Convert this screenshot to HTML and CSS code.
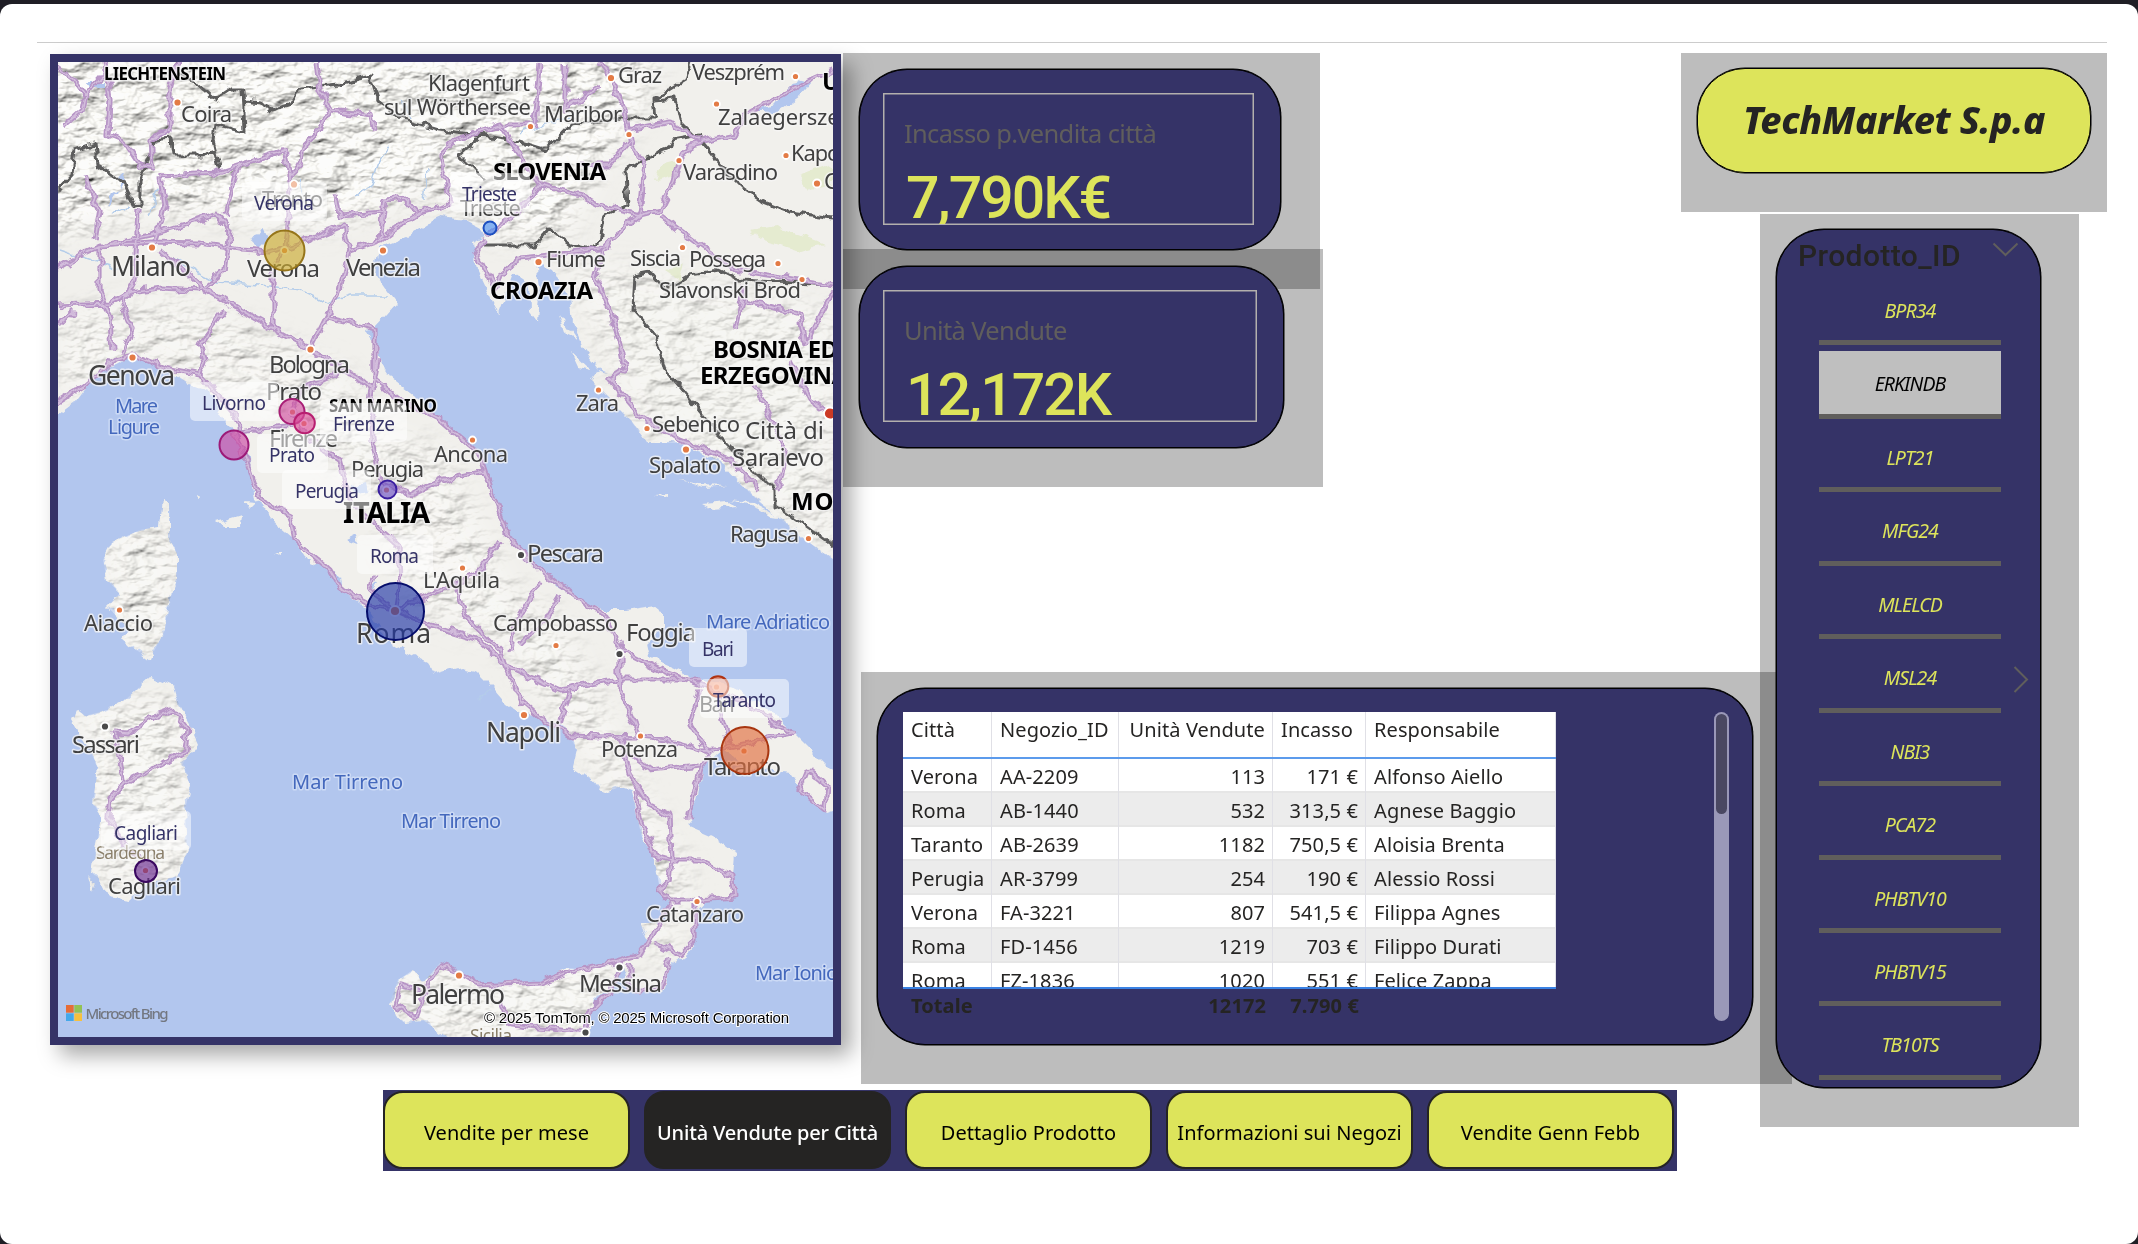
FILE: index.html
```html
<!DOCTYPE html>
<html lang="it">
<head>
<meta charset="utf-8">
<title>TechMarket S.p.a</title>
<link rel="stylesheet" href="styles.css">
</head>
<body>
<div class="sheet">
  <div class="rule"></div>
  <main class="report">
    <section class="map">
      <svg viewBox="58 62 775 975" width="775" height="975">
        <defs>
          <filter id="rough" x="0" y="0" width="100%" height="100%">
            <feTurbulence type="fractalNoise" baseFrequency="0.09" numOctaves="2" seed="4" result="n"/>
            <feDisplacementMap in="SourceGraphic" in2="n" scale="10" xChannelSelector="R" yChannelSelector="G"/>
          </filter>
          <filter id="relief" x="0" y="0" width="100%" height="100%">
            <feTurbulence type="fractalNoise" baseFrequency="0.035 0.06" numOctaves="4" seed="8"/>
            <feDiffuseLighting lighting-color="#fffefa" surfaceScale="9" diffuseConstant="1.13"><feDistantLight azimuth="235" elevation="58"/></feDiffuseLighting>
          </filter>
          <filter id="soft"><feGaussianBlur stdDeviation="14"/></filter>
          <path id="mainland" d="M40 40H850V575L833 560 810 543 790 527 760 503 740 483 723 463 680 443 647 443 630 420 607 397 590 380 597 370 610 373 597 367 583 347 573 323 570 297 553 270 537 263 540 285 537 320 531 312 530 285 513 273 503 300 498 313 493 303 477 270 473 243 487 237 480 227 467 220 440 217 433 220 407 237 380 247 375 273 387 290 397 303 375 327 378 357 393 380 423 403 440 420 457 433 472 445 487 470 497 510 503 530 537 567 557 587 580 600 603 610 627 610 653 606 663 610 663 627 647 643 650 657 673 667 697 680 733 687 773 713 793 733 833 773 850 790V805L827 813 800 787 790 773 750 767 723 750 703 767 697 800 688 813 690 827 713 837 735 853 733 877 737 888 733 897 707 900 695 913 695 943 687 955 670 967 663 993 630 992 627 980 622 962 640 957 648 940 640 925 667 920 670 903 660 890 657 873 653 853 642 837 637 817 632 790 620 787 603 793 593 780 573 767 577 750 565 728 540 717 520 713 508 705 495 690 477 672 460 668 435 675 427 663 407 653 387 640 367 608 343 593 340 577 320 560 307 560 292 537 280 527 270 520 267 510 254 500 252 485 250 460 240 445 232 430 222 415 210 392 190 385 170 372 150 360 130 357 105 370 90 382 75 402 58 415 40 425Z"/>
          <path id="islands" d="M163 500L170 503 170 540 177 553 177 580 167 607 165 630 153 653 150 660 123 640 129 630 108 607 120 593 107 580 103 560 112 543 140 530 160 527ZM77 710L85 716 107 710 123 702 150 677 173 687 177 700 187 720 197 743 183 763 190 787 185 810 187 850 177 877 163 880 147 883 130 900 110 897 103 883 92 873 97 843 102 817 93 803 98 767 93 757 73 720ZM390 1003L398 980 413 970 423 983 440 963 460 973 483 987 540 983 567 968 590 970 618 960 610 987 593 1000 590 1020 590 1050H455L447 1037 423 1020 403 1022ZM217 522L228 519 241 515 240 526 222 526ZM680 481L700 485 728 486 705 488ZM656 495L668 494 668 498ZM702 504L728 502 736 507 712 509ZM728 500L750 504 770 517 780 518 752 502ZM308 558L318 561 312 564ZM88 876L96 885 93 893ZM560 315L577 340 566 335ZM571 352L590 370 578 367ZM596 376L610 388 603 389ZM638 412L645 420 641 422ZM275 553H282V556ZM196 495L201 497 197 499ZM244 501L254 502 248 508Z"/>
          <clipPath id="land"><use href="#mainland"/><use href="#islands"/></clipPath>
          <mask id="hills">
            <g fill="#fff" filter="url(#soft)">
              <path d="M40 40H660L640 110 600 165 560 240 500 235 430 190 330 225 230 215 140 210 40 240Z"/>
              <path d="M60 320L110 300 140 370 60 400ZM135 295L210 310 340 370 380 430 440 450 480 520 510 590 560 620 600 700 640 790 690 880 660 985 640 900 600 770 560 720 500 640 420 610 370 500 310 430 200 380 130 350Z" opacity=".6"/>
              <path d="M560 260L640 270 833 310V560L760 500 640 430Z" opacity=".5"/>
              <path d="M100 520H180V650H110ZM80 700H190V890H100ZM390 960H620V1040H400Z" opacity=".65"/>
            </g>
          </mask>
        </defs>
        <rect x="58" y="62" width="775" height="975" fill="#b2c6ee"/>
        <g filter="url(#rough)">
          <g fill="#f1f0ec"><use href="#mainland"/><use href="#islands"/></g>
        </g>
        <g clip-path="url(#land)">
          <g mask="url(#hills)"><rect class="relief" x="58" y="62" width="775" height="975" filter="url(#relief)"/></g>
        </g>
        <g filter="url(#rough)">
          <g fill="#dfe8c4" opacity=".7"><path d="M750 230L775 225 800 235 825 245 800 252 765 240ZM660 165L680 160 675 175 655 180ZM800 175L825 165 833 170V185L810 190ZM665 270L685 262 680 280Z"/></g>
          <g fill="#b2c6ee"><path d="M752 112L775 105 797 78 812 82 800 96 778 112ZM252 242L262 228 268 240 258 250ZM88 82H104V88H90ZM118 178L126 172 122 190ZM108 195L118 190 110 205ZM346 539L356 534 358 544ZM370 583L378 584 374 590ZM353 486L366 484 368 492 356 494ZM366 332L375 330 372 342Z"/></g>
          <g class="river"><path d="M165 255L215 282 260 285 300 290 325 303 350 295 388 295M355 198L372 185 378 165 390 145M400 100L410 118M424 200L428 168M150 215L160 185M520 133L550 123 570 118M110 215L130 205M60 250L120 270M478 700L490 690M300 180L305 205"/></g>
          <g><path id="frontier" class="border-glow" d="M58 190L72 175 75 150 95 143 97 165 125 185 135 207 140 205 140 180 155 140 170 138 172 155 200 155 215 150 220 168 213 140 215 125 245 132 243 90 230 90 215 100 195 82 178 75 175 62M243 100L262 102 270 110 290 105 300 88 340 84 370 76 378 100 400 118 440 130 480 135 520 142 546 150 570 125 620 118 655 118 653 100 685 80 690 62M655 100L675 98 680 120 700 140 720 165 745 190 760 200 790 212 833 218M700 135L672 140 668 150 640 160 625 170 627 205 605 215 600 240 590 250 570 245 548 228 535 245 480 245M483 135L460 155 475 170 485 180M635 275L650 272 665 290 690 275 720 270 740 280 833 285M635 275L633 310 655 335 665 370 690 400 720 435 750 465 775 490 775 505 805 525 833 545"/></g>
          <use href="#frontier" class="border"/>
          <g class="road"><path id="net" d="M58 67L75 80 85 95 82 110 65 125M85 95L108 70M105 62L110 100 108 135 125 142 140 165 152 168 150 138 170 130 170 90 178 60M317 62L320 90 330 108 315 135 305 145 300 165 290 175 290 190 285 250 273 270 273 330M58 268L80 255 100 246 150 242 200 243 240 250 270 252 310 240 345 225 350 250 380 240 400 225 420 212 450 204M160 250L200 285 240 310 275 330 310 350 345 370 375 390M100 246L100 290 110 320 112 350M58 305L110 303 130 292 160 288 200 290 225 270 230 230 215 212M85 175L90 190 100 210 95 240M58 402L85 385 115 360 135 355 165 368 200 375 205 360 200 345 225 310M123 355L132 330 122 305 135 280 138 210M350 250L340 290 325 320 310 350 298 340M160 176L215 173 240 165 285 150 290 175M225 215L235 175 240 165M155 240L165 205 160 176M327 317L360 325 375 330 375 380M337 195L340 215 385 212M380 240L385 200 405 198 417 212M105 245L150 235 215 215M58 325L75 310M330 110L372 115 375 130M450 204L440 155 455 140 500 125 535 125 540 65M500 125L520 155 540 185 580 195 600 205 640 215 660 210 675 180 680 160 690 145 735 135 745 115 810 80 833 70M600 62L612 80 625 110 630 140 610 165 580 165M630 140L645 165 640 215M565 65V110L600 85M660 215L700 245 735 270 800 280 833 285M640 215L610 240 600 260 595 275 610 310 620 345 625 370 610 380 640 415 680 440 730 460 760 490M487 240L475 250 495 290 500 275 520 258 600 250 610 240M487 235L515 215 540 185M745 285L742 300 735 330M745 300L800 315 805 345 833 290M755 385L770 415 785 450 778 490M790 360L810 400 830 413M628 130L670 122 700 140M375 380L400 400 440 420 480 455 495 500 510 540 540 570 580 600 605 615 622 650 660 670 700 685 740 700 795 735M345 370L300 390 292 410 310 440 340 460 350 500 375 525 398 545 400 580 395 610M292 425L240 432 235 415 200 375M234 432L250 470 260 500 290 515 295 540 330 570 342 590 370 605 395 610 430 625 480 640 505 665 520 700 545 722 570 735 640 737 665 740 700 750 725 748 795 733M378 360L370 400 372 440 380 480 410 495 440 480 485 470M395 610L440 590 480 570 500 540M455 580L465 615 500 650 515 690M395 610L370 590 375 575M505 665L560 690 620 680 700 680M570 690L560 725M620 650V690L640 735M540 580L530 600 515 625 512 650M560 595L545 620 520 645M620 735L630 775 650 805 670 815 672 860 670 880 660 890 670 900 697 900M688 820L700 770 710 755M630 755L650 770 700 765M670 860L700 860 733 877 735 897 697 900M672 860L655 855 640 820 636 790M670 903L650 940 640 955 615 962 570 972 540 982 480 985 455 970 440 965 425 990 415 1018 395 1005 400 985 420 990M620 965L610 990 590 1010 585 1032 560 1030 510 1025 500 1000M695 905V940L680 955 655 942M670 960L660 990 630 990V965M113 732L130 733 150 718 172 710 188 730 185 750 160 765 125 782 110 800 108 815 120 840 140 860M113 732L120 760 123 780M718 690L722 720 730 745M700 690L690 725 710 755M808 770L827 785 825 810 800 790Z"/></g>
          <use href="#net" class="road-core"/>
        </g>
        <g class="dots">
          <circle cx="177.500" cy="102.500" r="4"/><circle cx="294" cy="184.500" r="4"/><circle cx="152" cy="247.500" r="4"/><circle cx="383" cy="250.500" r="4"/><circle cx="310.500" cy="349.500" r="4"/><circle cx="132.500" cy="357.500" r="4"/><circle cx="611" cy="78" r="4"/><circle cx="530.500" cy="126.500" r="3.500"/><circle cx="629" cy="134.500" r="3.500"/><circle cx="716.500" cy="104" r="3.500"/><circle cx="795.500" cy="76.500" r="3.500"/><circle cx="679" cy="160.500" r="3.500"/><circle cx="786" cy="155.500" r="3.500"/><circle cx="817" cy="183.500" r="4"/><circle cx="682.500" cy="247.500" r="3.500"/><circle cx="778" cy="263.500" r="3.500"/><circle cx="802" cy="279.500" r="3.500"/><circle cx="538.500" cy="262" r="4"/><circle cx="598.500" cy="390" r="3.500"/><circle cx="647" cy="428.500" r="3.500"/><circle cx="686" cy="449.500" r="4"/><circle cx="808.500" cy="538.500" r="3.500"/><circle cx="472.500" cy="440" r="3.500"/><circle cx="462.500" cy="568" r="3.500"/><circle cx="556" cy="645.500" r="3.500"/><circle cx="524" cy="715" r="4"/><circle cx="640.500" cy="736" r="3.500"/><circle cx="697" cy="901.500" r="3.500"/><circle cx="119.500" cy="610" r="3.500"/><circle cx="459" cy="975.500" r="4"/><circle cx="395" cy="611" r="5"/><circle cx="292.500" cy="412" r="3.500"/><circle cx="304" cy="423.500" r="3.500"/><circle cx="386.500" cy="490" r="3.500"/><circle cx="744" cy="751" r="3.500"/><circle cx="716.500" cy="687" r="3.500"/><circle cx="145.500" cy="870.500" r="3.500"/><circle cx="284.500" cy="250.500" r="3.500"/>
          <g fill="#4a4a4a"><circle cx="521" cy="555" r="4"/><circle cx="619.500" cy="654" r="4"/><circle cx="105" cy="726.500" r="4"/><circle cx="619.500" cy="967.500" r="4"/><circle cx="585.500" cy="1032.500" r="4"/></g>
          <circle cx="830" cy="413.500" r="6" fill="#cc3a25"/>
        </g>
        <g class="city" font-size="22">
          <text x="181" y="121.500" textLength="51">Coira</text><text x="428" y="90.500" textLength="102">Klagenfurt</text><text x="384" y="114.500" textLength="147">sul Wörthersee</text><text x="618" y="83" textLength="44">Graz</text><text x="544" y="121.500" textLength="78">Maribor</text><text x="692" y="80" textLength="93">Veszprém</text><text x="718" y="124.500" textLength="135">Zalaegerszeg</text><text x="791" y="161" textLength="88">Kaposvár</text><text x="824" y="189">Csurgó</text><text x="683" y="179.500" textLength="95">Varasdino</text><text x="546" y="267" textLength="60">Fiume</text><text x="630" y="266" textLength="51">Siscia</text><text x="689" y="266.500" textLength="77">Possega</text><text x="659" y="298" textLength="142">Slavonski Brod</text>
          <text x="262" y="207" textLength="61">Trento</text><text x="460" y="215.500" textLength="61">Trieste</text><text x="351" y="477" textLength="73">Perugia</text><text x="434" y="462" textLength="74">Ancona</text><text x="423" y="588" textLength="77">L'Aquila</text><text x="84" y="630.500" textLength="69">Aiaccio</text><text x="576" y="410.500" textLength="43">Zara</text><text x="652" y="432" textLength="88">Sebenico</text><text x="649" y="473" textLength="72">Spalato</text><text x="730" y="542" textLength="69">Ragusa</text><text x="493" y="630.500" textLength="125">Campobasso</text><text x="601" y="756.500" textLength="77">Potenza</text><text x="108" y="893.500" textLength="73">Cagliari</text><text x="646" y="921.500" textLength="98">Catanzaro</text><text x="699" y="711.500" textLength="36">Bari</text>
        </g>
        <g class="city" font-size="24">
          <text x="247" y="276.500" textLength="73">Verona</text><text x="346" y="275.500" textLength="75">Venezia</text><text x="269" y="372.500" textLength="81">Bologna</text><text x="266" y="400" textLength="56">Prato</text><text x="269" y="447" textLength="69">Firenze</text><text x="745" y="439" textLength="79">Città di</text><text x="732" y="466" textLength="92">Saraievo</text><text x="527" y="562" textLength="77">Pescara</text><text x="626" y="641" textLength="70">Foggia</text><text x="704" y="775" textLength="77">Taranto</text><text x="72" y="752.500" textLength="68">Sassari</text><text x="579" y="992" textLength="83">Messina</text>
        </g>
        <g class="city" font-size="26.500">
          <text x="111" y="275.500" textLength="80">Milano</text><text x="88" y="385" textLength="87">Genova</text><text x="356" y="642.500" textLength="75">Roma</text><text x="486" y="741.500" textLength="75">Napoli</text><text x="411" y="1003.500" textLength="94">Palermo</text>
        </g>
        <g class="region" font-size="17.500"><text x="96" y="858.500" textLength="69">Sardegna</text><text x="470" y="1042" textLength="42">Sicilia</text></g>
        <g class="sea" font-size="20"><text x="115" y="413" textLength="43">Mare</text><text x="108" y="434" textLength="52">Ligure</text><text x="706" y="628.500" textLength="124">Mare Adriatico</text><text x="292" y="788.500" textLength="111">Mar Tirreno</text><text x="401" y="827.500" textLength="100">Mar Tirreno</text><text x="755" y="979.500" textLength="83">Mar Ionio</text></g>
        <g class="country" font-size="24">
          <text x="493" y="180" textLength="113">SLOVENIA</text><text x="490" y="299" textLength="103">CROAZIA</text><text x="713" y="357.500" textLength="125">BOSNIA ED</text><text x="700" y="384" textLength="148">ERZEGOVINA</text><text x="791" y="510" textLength="182">MONTENEGRO</text><text x="822" y="89.500">UNGHERIA</text>
          <g font-size="17"><text x="104" y="79.500" textLength="122">LIECHTENSTEIN</text><text x="329" y="412" textLength="108">SAN MARINO</text></g>
          <text x="343" y="522.500" font-size="29" textLength="87">ITALIA</text>
        </g>
        <g class="bubbles">
          <circle cx="284.500" cy="250.500" r="20" fill="#cbab32" stroke="#96751a"/>
          <circle cx="490" cy="228" r="6.500" fill="#4a8ef0" stroke="#1c4fc0"/>
          <circle cx="292" cy="411.500" r="12.500" fill="#d050a0" stroke="#a81e76"/>
          <circle cx="304.500" cy="423" r="10.300" fill="#dd529b" stroke="#b81e70"/>
          <circle cx="234" cy="445" r="14.500" fill="#cc4ba4" stroke="#9c1a78"/>
          <circle cx="387.500" cy="489.500" r="9" fill="#6b4fc0" stroke="#3b1fa0"/>
          <circle cx="395.500" cy="611.500" r="28.500" fill="#2338a6" stroke="#050d6b"/>
          <circle cx="718" cy="686.500" r="10.300" fill="#f07a50" stroke="#b03210"/>
          <circle cx="745" cy="750.500" r="23.500" fill="#e2713f" stroke="#a83610"/>
          <circle cx="146" cy="871" r="11" fill="#6b2a90" stroke="#3a0860"/>
        </g>
        <g class="tags">
          <rect x="242" y="182" width="85" height="39" rx="5"/><rect x="450" y="173" width="80" height="39" rx="5"/><rect x="190" y="382" width="88" height="39" rx="5"/><rect x="320" y="403" width="87" height="39" rx="5"/><rect x="257" y="434" width="71" height="39" rx="5"/><rect x="282" y="470" width="89" height="39" rx="5"/><rect x="357" y="535" width="76" height="39" rx="5"/><rect x="689" y="628" width="58" height="39" rx="5"/><rect x="700" y="679" width="89" height="39" rx="5"/><rect x="101" y="811" width="90" height="39" rx="5"/>
        </g>
        <g class="tag-text" font-size="19">
          <text x="254" y="210" textLength="60">Verona</text><text x="462" y="201" textLength="55">Trieste</text><text x="202" y="410" textLength="64">Livorno</text><text x="333" y="431" textLength="62">Firenze</text><text x="269" y="462" textLength="46">Prato</text><text x="295" y="498" textLength="64">Perugia</text><text x="370" y="563" textLength="49">Roma</text><text x="702" y="656" textLength="32">Bari</text><text x="713" y="707" textLength="63">Taranto</text><text x="114" y="840" textLength="64">Cagliari</text>
        </g>
        <path fill="#e66c37" d="M66 1005H73.700V1012.700H66Z"/><path fill="#93c254" d="M74.300 1005H82V1012.700H74.300Z"/><path fill="#45a8ea" d="M66 1013.300H73.700V1021H66Z"/><path fill="#f7c03e" d="M74.300 1013.300H82V1021H74.300Z"/>
        <text class="bing" x="85.500" y="1018.500" textLength="83">Microsoft Bing</text>
        <text class="credit" x="484" y="1023" textLength="305">© 2025 TomTom, © 2025 Microsoft Corporation</text>
      </svg>
    </section>

    <div class="middle">
      <section class="visual kpi kpi-income"><div class="panel"><div class="kpi-box"><div class="kpi-label">Incasso p.vendita città</div><div class="kpi-value">7,790K€</div></div></div></section>
      <section class="visual kpi kpi-units"><div class="panel"><div class="kpi-box"><div class="kpi-label">Unità Vendute</div><div class="kpi-value units">12,172K</div></div></div></section>
      <section class="visual stores">
        <div class="panel">
          <div class="table">
            <div class="rows">
              <div class="row head"><span>Città</span><span>Negozio_ID</span><span>Unità Vendute</span><span>Incasso</span><span>Responsabile</span></div>
              <div class="row"><span>Verona</span><span>AA-2209</span><span>113</span><span>171 €</span><span>Alfonso Aiello</span></div>
              <div class="row"><span>Roma</span><span>AB-1440</span><span>532</span><span>313,5 €</span><span>Agnese Baggio</span></div>
              <div class="row"><span>Taranto</span><span>AB-2639</span><span>1182</span><span>750,5 €</span><span>Aloisia Brenta</span></div>
              <div class="row"><span>Perugia</span><span>AR-3799</span><span>254</span><span>190 €</span><span>Alessio Rossi</span></div>
              <div class="row"><span>Verona</span><span>FA-3221</span><span>807</span><span>541,5 €</span><span>Filippa Agnes</span></div>
              <div class="row"><span>Roma</span><span>FD-1456</span><span>1219</span><span>703 €</span><span>Filippo Durati</span></div>
              <div class="row"><span>Roma</span><span>FZ-1836</span><span>1020</span><span>551 €</span><span>Felice Zappa</span></div>
            </div>
            <div class="row total"><span>Totale</span><span></span><span>12172</span><span>7.790 €</span><span></span></div>
          </div>
          <div class="scrollbar"><div class="thumb"></div></div>
        </div>
      </section>
    </div>

    <div class="side">
      <section class="visual brand"><h1 class="panel">TechMarket S.p.a</h1></section>
      <section class="visual slicer">
        <div class="panel">
          <div class="slicer-head"><h2>Prodotto_ID</h2><svg class="down" width="27" height="16" viewBox="0 0 27 16"><path d="M1.500 1.500L13.500 13 25.500 1.500"/></svg></div>
          <ul class="items">
            <li>BPR34</li><li class="selected">ERKINDB</li><li>LPT21</li><li>MFG24</li><li>MLELCD</li><li>MSL24</li><li>NBI3</li><li>PCA72</li><li>PHBTV10</li><li>PHBTV15</li><li>TB10TS</li>
          </ul>
          <svg class="next" width="16" height="27" viewBox="0 0 16 27"><path d="M1.500 1L14 13.500 1.500 26"/></svg>
        </div>
      </section>
    </div>
  </main>

  <nav class="tabs">
    <a>Vendite per mese</a><a class="active">Unità Vendute per Città</a><a>Dettaglio Prodotto</a><a>Informazioni sui Negozi</a><a>Vendite Genn Febb</a>
  </nav>
</div>
</body>
</html>
```
FILE: styles.css
```css
* { box-sizing: border-box; }

body {
  margin: 0;
  padding-top: 4px;
  height: 1244px;
  overflow: hidden;
  background: #1f1e25;
  font-family: "Noto Sans", "Open Sans", sans-serif;
  color: #252423;
}

.sheet {
  height: 1240px;
  padding-top: 38px;
  background: #fff;
  border-radius: 12px;
  overflow: hidden;
}

.rule { height: 1px; margin: 0 31px 0 37px; background: #ccc; }

/* Report canvas */
.report {
  display: grid;
  grid-template-columns: 793px 838px 426px;
  height: 1037px;
  margin: 10px 0 0 50px;
}

.visual { background: rgba(0, 0, 0, .26); }

.panel {
  background: #353367;
  border: 1px solid #000;
  box-shadow: 0 0 0 .5px #000;
  border-radius: 48px;
}

/* Map */
.map {
  width: 791px;
  height: 991px;
  margin-top: 1px;
  border: 8px solid #353367;
  box-shadow: 10px 10px 20px rgba(0, 0, 0, .35);
}
.map svg { display: block; }
.relief { opacity: .8; mix-blend-mode: multiply; }
.river { fill: none; stroke: #b5cdea; stroke-width: 1.5; }
.border-glow { fill: none; }
.border { fill: none; stroke: #5c5c5c; stroke-width: 3; stroke-linejoin: round; }
.road { fill: none; stroke: #b795c6; stroke-width: 5.2; stroke-linejoin: round; }
.road-core { fill: none; stroke: #d3bddc; stroke-width: 1.7; }
.dots { fill: #e37b45; stroke: #fff; stroke-width: 1.8; }
.city, .region, .sea, .country { paint-order: stroke; stroke: rgba(245, 245, 245, .75); stroke-width: 3px; stroke-linejoin: round; }
.city { fill: #404040; }
.region { fill: #8a7f6a; }
.sea { fill: #4468bd; stroke: rgba(215, 226, 248, .7); }
.country { fill: #000; font-weight: 700; }
.bubbles { fill-opacity: .66; stroke-width: 2; }
.tags { fill: #fff; fill-opacity: .52; }
.tag-text { fill: #353367; }
.bing { font-size: 15px; fill: #737780; font-weight: 500; }
.credit { font: 15px "Liberation Sans", Arial, sans-serif; fill: #000; paint-order: stroke; stroke: #fff; stroke-width: 2px; }

/* KPI cards */
.middle { position: relative; z-index: 1; }
.kpi { width: 477px; height: 236px; padding: 16px 39px 38px 16px; }
.kpi-units { width: 480px; height: 238px; margin-top: -40px; padding-top: 17px; }
.kpi .panel { height: 181px; padding: 23px 26px 24px 23px; }
.kpi-units .panel { height: 182px; }
.kpi-box { height: 132px; border: 1px solid #b3b0ad; box-shadow: inset 0 0 0 .5px #b3b0ad; padding: 20px 20px 0; overflow: hidden; white-space: nowrap; }
.kpi-label { font-size: 25.500px; line-height: 38px; color: #605e5c; letter-spacing: -.65px; }
.kpi-value { margin: 16px 0 0 2px; font: 500 59px/60px Roboto, sans-serif; color: #dde45b; letter-spacing: -2px; }
.units { letter-spacing: -2px; }

/* Stores table */
.stores { width: 931px; height: 412px; margin: 185px 0 0 18px; padding: 16px 39px 39px 16px; }
.stores .panel { display: flex; justify-content: space-between; height: 357px; padding: 23px 23px 0 25px; }
.table { width: 653px; font-size: 20px; letter-spacing: .1px; white-space: nowrap; }
.rows { height: 277px; overflow: hidden; background: #fff; border-bottom: 2px solid #3a82e4; }
.row { display: grid; grid-template-columns: 89px 127px 154px 93px 190px; height: 34px; border-bottom: 2px solid #e6e6e6; }
.row span { padding: 2px 7px 0 8px; border-right: 1px solid #e0e0e6; height: 34px; line-height: 31px; }
.row span:nth-child(3), .row span:nth-child(4) { text-align: right; }
.row:nth-child(odd):not(.head):not(.total) { background: #ececec; }
.row.head { height: 47px; border-bottom: 2px solid #5c9bec; }
.row.head span { height: 45px; padding-top: 2px; }
.row.head span:nth-child(4) { text-align: left; }
.row.total { border: 0; font-weight: 700; }
.row.total span { border: 0; padding-top: 1px; }
.scrollbar { width: 15px; height: 309px; padding: 2px; border-radius: 8px; background: #9a98b8; }
.thumb { height: 100px; border-radius: 6px; background: #4a4862; }

/* Right column */
.side { position: relative; z-index: 2; }
.brand { width: 426px; height: 159px; padding: 15px 16px; }
.brand .panel {
  display: flex; align-items: center; justify-content: center;
  height: 105px; margin: 0; padding-bottom: 2px;
  background: #dde45b; font-size: 37.500px; font-weight: 800; font-style: italic; letter-spacing: -.4px;
}
.slicer { width: 319px; height: 913px; margin: 2px 0 0 79px; padding: 15px 38px 39px 16px; }
.slicer .panel { position: relative; height: 859px; padding: 10px 21px 0 21px; }
.slicer-head { display: flex; justify-content: space-between; height: 38px; }
.slicer-head h2 { margin: 0; font: 500 30px/32px Roboto, sans-serif; letter-spacing: .4px; }
.slicer svg { fill: none; stroke: #605e5c; stroke-width: 2; }
.down { margin-top: 2px; }
.items { margin: 0; padding: 0 18px 0 21px; list-style: none; }
.items li {
  height: 67.450px; margin-bottom: 6px; padding-top: 2px;
  border-bottom: 5px solid #605e5c;
  text-align: center; font-size: 19.500px; font-style: italic; line-height: 61px; letter-spacing: -.9px;
  color: #dde45b;
}
.items .selected { background: #bfbfbf; color: #000; }
.next { position: absolute; right: 11px; top: 436px; }

/* Page navigation */
.tabs { display: flex; gap: 14px; width: 1294px; height: 81px; margin-left: 383px; padding-top: 1px; background: #353367; }
.tabs a {
  width: 247px; height: 78px;
  border: 2px solid #252423; border-radius: 20px;
  background: #dde45b; color: #000;
  font-size: 20px; line-height: 79px; text-align: center; letter-spacing: .05px; white-space: nowrap;
}
.tabs .active { background: #252423; color: #fff; font-weight: 500; letter-spacing: -.15px; }
```
